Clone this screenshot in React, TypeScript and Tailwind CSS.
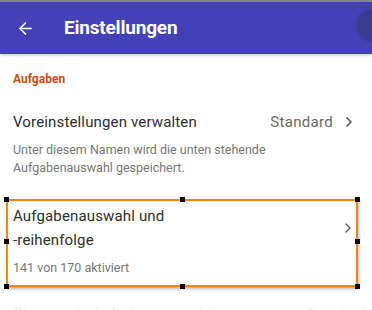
import { ArrowLeft, ChevronRight } from "lucide-react";

function Handle({ className }: { className: string }) {
  return <div className={`absolute w-[5px] h-[5px] bg-black ${className}`} />;
}

export default function App() {
  return (
    <div className="w-[372px] h-[310px] overflow-hidden bg-white relative" style={{ fontFamily: "Roboto, 'Noto Sans', sans-serif" }}>
      <div className="h-[2px] bg-[#8a8a8a]" />
      <div className="h-[52px] bg-[#4441b7] flex items-center relative shadow-[0_1px_3px_rgba(0,0,0,0.25)]">
        <ArrowLeft className="ml-[16px] text-white" size={19} strokeWidth={2} />
        <span className="ml-[29px] text-white text-[19px] font-bold tracking-[-0.2px]">Einstellungen</span>
        <div className="absolute right-[-18px] top-[6px] w-[34px] h-[34px] rounded-full bg-[#3a3a8a] opacity-80 blur-[1px]" />
      </div>
      <div className="px-[13px] pt-[16px] text-[12px] font-bold text-[#cf4b10]">Aufgaben</div>
      <div className="flex items-center pl-[13px] pr-[15px] mt-[23px]">
        <span className="text-[15px] text-[#2e2e2e] tracking-[0.15px]">Voreinstellungen verwalten</span>
        <span className="ml-auto text-[15px] text-[#6a6a6a] tracking-[0.3px]">Standard</span>
        <ChevronRight className="ml-[8px] text-[#555]" size={16} strokeWidth={2.5} />
      </div>
      <div className="pl-[13px] pr-[20px] mt-[7px] text-[12.5px] leading-[18px] text-[#777]">
        Unter diesem Namen wird die unten stehende Aufgabenauswahl gespeichert.
      </div>
      <div className="relative mx-[6px] w-[352px] mt-[22px] h-[88px] border-2 border-[#f7860b] shadow-[1px_2px_3px_rgba(0,0,0,0.3)] flex items-start">
        <div className="pl-[5px] pt-[3px] flex-1">
          <div className="text-[15px] leading-[24px] text-[#2e2e2e] tracking-[0.15px]">Aufgabenauswahl und<br />-reihenfolge</div>
          <div className="mt-[7px] text-[12.5px] text-[#777]">141 von 170 aktiviert</div>
        </div>
        <ChevronRight className="mt-[19px] mr-0 text-[#555]" size={16} strokeWidth={2} />
        <Handle className="left-[-4px] top-[-4px]" />
        <Handle className="left-[172px] top-[-4px]" />
        <Handle className="right-[-4px] top-[-4px]" />
        <Handle className="left-[-4px] top-[38px]" />
        <Handle className="right-[-4px] top-[38px]" />
        <Handle className="left-[-4px] bottom-[-4px]" />
        <Handle className="left-[172px] bottom-[-4px]" />
        <Handle className="right-[-4px] bottom-[-4px]" />
      </div>
      <div className="flex justify-between pl-[13px] pr-[6px] mt-[17px] text-[15px] text-[#ddd]">
        <span>Übungen in Aufgabenauswahl</span>
        <span>Standard</span>
      </div>
    </div>
  );
}
